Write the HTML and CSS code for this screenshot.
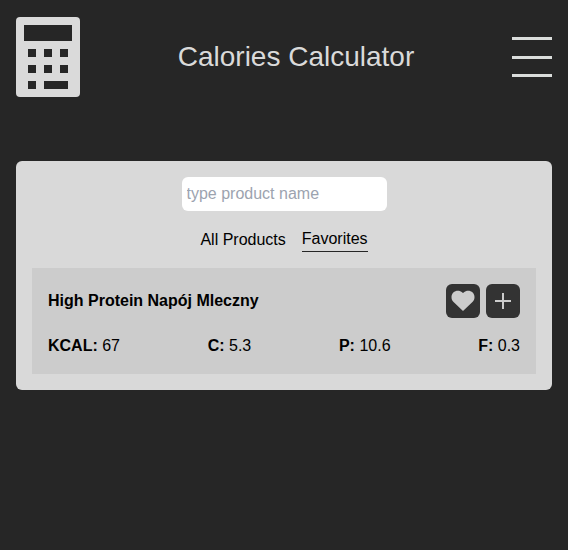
FILE: index.html
```html
<!DOCTYPE html>
<html lang="en">
<head>
<meta charset="utf-8">
<title>Calories Calculator</title>
<link rel="stylesheet" href="styles.css">
</head>
<body>
<header class="header">
  <svg class="logo" viewBox="0 0 64 80" aria-hidden="true">
    <rect width="64" height="80" rx="4" fill="#dadada"/>
    <path fill="#262626" d="M8 8h48v16H8zM12 32h8v8h-8zM28 32h8v8h-8zM44 32h8v8h-8zM12 48h8v8h-8zM28 48h8v8h-8zM44 48h8v8h-8zM12 64h8v8h-8zM28 64h24v8H28z"/>
  </svg>
  <h1 class="title">Calories Calculator</h1>
  <button class="menu" aria-label="Menu">
    <svg width="40" height="40" viewBox="0 0 40 40"><path fill="#dadddb" d="M0 0h40v3H0zM0 19h40v3H0zM0 37h40v3H0z"/></svg>
  </button>
</header>
<main class="card">
  <input class="search" type="text" placeholder="type product name">
  <nav class="tabs">
    <a class="tab">All Products</a>
    <a class="tab active">Favorites</a>
  </nav>
  <article class="product">
    <div class="product-head">
      <h2 class="name">High Protein Napój Mleczny</h2>
      <div class="actions">
        <button class="action" aria-label="Favorite">
          <svg width="24" height="24" viewBox="0 0 24 24"><path fill="#cccccc" d="M12 22L2.300 12.800C-.2 10.200 0 6 2.300 3.600 4.800 1.200 8.800 1.200 11.300 3.500L12 4.100l.7-.6c2.500-2.300 6.500-2.300 9 .1 2.300 2.400 2.500 6.600 0 9.200z"/></svg>
        </button>
        <button class="action" aria-label="Add">
          <svg width="16" height="16" viewBox="0 0 16 16"><path fill="#cccccc" d="M7 0h2v7h7v2H9v7H7V9H0V7h7z"/></svg>
        </button>
      </div>
    </div>
    <div class="facts">
      <span><b>KCAL:</b> 67</span>
      <span><b>C:</b> 5.3</span>
      <span><b>P:</b> 10.6</span>
      <span><b>F:</b> 0.3</span>
    </div>
  </article>
</main>
</body>
</html>
```

FILE: styles.css
```css
* { box-sizing: border-box; margin: 0; padding: 0; }

body {
  min-height: 550px;
  padding: 17px 16px 0;
  background: #262626;
  color: #000;
  font: 16px/24px "Liberation Sans", Arial, sans-serif;
}

button { display: flex; border: 0; background: none; }

.header {
  display: flex;
  align-items: center;
  justify-content: space-between;
  height: 80px;
  margin-bottom: 64px;
}

.logo { width: 64px; height: 80px; }

.title {
  color: #dadada;
  font-size: 28px;
  font-weight: 400;
  line-height: 36px;
}

.card {
  display: flex;
  flex-direction: column;
  align-items: center;
  height: 229px;
  padding: 16px;
  border-radius: 6px;
  background: #d9d9d9;
}

.search {
  width: 205px;
  height: 34px;
  padding: 5px;
  border: 0;
  border-radius: 6px;
  background: #fff;
  font: inherit;
}

.search::placeholder { color: #9ca3af; opacity: 1; }

.tabs {
  display: flex;
  align-items: center;
  gap: 16px;
  margin: 16px 0;
}

.active { border-bottom: 1px solid #262626; }

.product {
  width: 100%;
  height: 106px;
  padding: 16px;
  background: #cccccc;
}

.product-head, .facts {
  display: flex;
  align-items: center;
  justify-content: space-between;
}

.name { font-size: 16px; line-height: 24px; }

.actions { display: flex; gap: 6px; }

.action {
  align-items: center;
  justify-content: center;
  width: 34px;
  height: 34px;
  border-radius: 6px;
  background: #333;
}

.facts { margin-top: 16px; }
```
